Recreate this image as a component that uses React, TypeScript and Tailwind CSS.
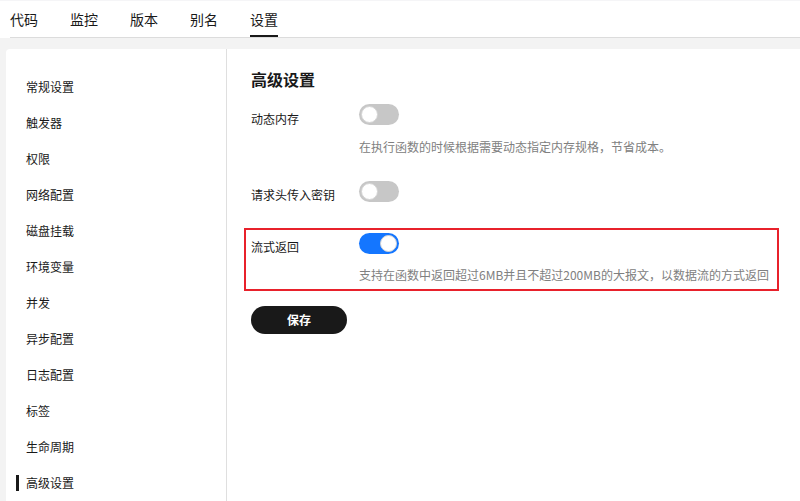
import React from "react";

const tabs = ["代码", "监控", "版本", "别名", "设置"];
const menu = [
  "常规设置",
  "触发器",
  "权限",
  "网络配置",
  "磁盘挂载",
  "环境变量",
  "并发",
  "异步配置",
  "日志配置",
  "标签",
  "生命周期",
  "高级设置",
];

const Toggle = ({ on }: { on?: boolean }) => (
  <div
    className={
      on
        ? "flex h-[21px] w-[40px] items-center justify-end rounded-full bg-[#1476ff] px-[2px]"
        : "flex h-[21px] w-[40px] items-center rounded-full bg-[#c7c7c7] px-[2px]"
    }
  >
    <div className="h-[17px] w-[17px] rounded-full border border-[#d4d4d4] bg-white" />
  </div>
);

const App = () => {
  return (
    <main
      className="flex h-[501px] w-[800px] flex-col overflow-hidden bg-white text-[#191919]"
      style={{ fontFamily: '"Noto Sans CJK SC", "Noto Sans", sans-serif' }}
    >
      <div className="h-px bg-[#f5f5f7]" />
      <div className="ml-[10px] flex h-[37px] gap-8 border-b border-[#dcdcdc]">
        {tabs.map((t) => (
          <div key={t} className="relative flex h-full items-center text-[14px]">
            {t}
            {t === "设置" && (
              <div className="absolute bottom-0 left-0 h-[2px] w-full bg-[#191919]" />
            )}
          </div>
        ))}
      </div>

      <div className="flex flex-1 bg-[#f3f3f3] pl-[6px] pt-[11px]">
        <div className="flex flex-1 rounded-tl-[4px] bg-white">
          <div className="w-[221px] border-r border-[#dfdfdf] pt-[20px]">
            {menu.map((m) => (
              <div key={m} className="relative flex h-[36px] items-center pl-[20px] text-[12px]">
                {m === "高级设置" && (
                  <div className="absolute left-[10px] top-[10px] h-[16px] w-[3px] bg-[#191919]" />
                )}
                {m}
              </div>
            ))}
          </div>

          <div className="flex-1 pl-[24px] pt-[19px]">
            <h2 className="text-[16px] font-bold leading-[22px]">高级设置</h2>

            <div className="mt-[14px] flex">
              <div className="mt-[5px] w-[108px] text-[12px] leading-[20px]">动态内存</div>
              <div>
                <Toggle />
                <div className="mt-[12px] text-[12px] leading-[20px] text-[#808080]">
                  在执行函数的时候根据需要动态指定内存规格，节省成本。
                </div>
              </div>
            </div>

            <div className="mt-[24px] flex">
              <div className="mt-[4px] w-[108px] text-[12px] leading-[20px]">请求头传入密钥</div>
              <Toggle />
            </div>

            <div className="-ml-[7px] mt-[23px] flex w-[535px] border-2 border-[#e8212b] pb-[4px] pl-[5px] pt-[3px]">
              <div className="mt-[4px] w-[108px] text-[12px] leading-[20px]">流式返回</div>
              <div>
                <Toggle on />
                <div className="mt-[11px] text-[12px] leading-[20px] text-[#808080]">
                  支持在函数中返回超过6MB并且不超过200MB的大报文，以数据流的方式返回
                </div>
              </div>
            </div>

            <button className="mt-[15px] flex h-[28px] w-[96px] items-center justify-center rounded-full bg-[#191919] text-[12px] font-bold text-white">
              保存
            </button>
          </div>
        </div>
      </div>
    </main>
  );
};

export default App;
